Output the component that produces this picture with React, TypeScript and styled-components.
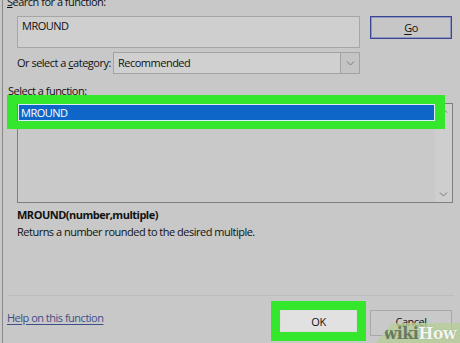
import styled, { createGlobalStyle } from "styled-components";

const GlobalStyle = createGlobalStyle`
  html, body {
    margin: 0;
    padding: 0;
    background: #c8c8c8;
  }
  body {
    font-family: "Open Sans", "Noto Sans", "Liberation Sans", sans-serif;
    font-size: 11px;
    letter-spacing: -0.5px;
    color: #111;
  }
`;

const GREEN = "#34e62c";

const Page = styled.div`
  position: relative;
  width: 460px;
  height: 343px;
  overflow: hidden;
  background: #c8c8c8;
`;

const Dialog = styled.div`
  margin-left: 2px;
  height: 343px;
  border-left: 1px solid #888;
  padding-left: 4px;
  box-sizing: border-box;
  display: flex;
  flex-direction: column;
`;

const Label = styled.div<{ $indent?: number; $top?: number }>`
  height: 14px;
  line-height: 14px;
  margin-top: ${(p) => p.$top ?? 0}px;
  padding-left: ${(p) => p.$indent ?? 0}px;
  white-space: nowrap;
`;

const Row = styled.div<{ $top: number }>`
  display: flex;
  align-items: flex-start;
  margin-top: ${(p) => p.$top}px;
  padding-left: 10px;
`;

const SearchBox = styled.div`
  width: 343px;
  height: 32px;
  box-sizing: border-box;
  border: 1px solid #a6a6a6;
  background: #cfcfcf;
  padding: 2px 4px;
  line-height: 14px;
`;

const GoButton = styled.div`
  margin-left: 10px;
  width: 82px;
  height: 23px;
  box-sizing: border-box;
  border: 1px solid #3a4790;
  box-shadow: inset 0 0 0 1px #8d95c0;
  background: #c6c6c6;
  display: flex;
  align-items: center;
  justify-content: center;
  u {
    text-decoration-thickness: 1px;
    text-underline-offset: 2px;
  }
`;

const CategoryLabel = styled.div`
  width: 96px;
  height: 22px;
  line-height: 22px;
  white-space: nowrap;
`;

const Select = styled.div`
  width: 247px;
  height: 22px;
  box-sizing: border-box;
  border: 1px solid #a3a3a3;
  background: #d0d0d0;
  display: flex;
  align-items: stretch;
`;

const SelectValue = styled.div`
  flex: 1;
  padding-left: 4px;
  line-height: 20px;
`;

const SelectArrow = styled.div`
  width: 18px;
  border-left: 1px solid #a3a3a3;
  background: #c4c4c4;
  display: flex;
  align-items: center;
  justify-content: center;
`;

const ListBox = styled.div`
  margin-top: 5px;
  margin-left: 10px;
  width: 436px;
  height: 100px;
  box-sizing: border-box;
  border: 1px solid #7e7e7e;
  background: #c9c9c9;
  display: flex;
`;

const ListItems = styled.div`
  flex: 1;
`;

const SelectedItem = styled.div`
  position: relative;
  height: 17px;
  box-sizing: border-box;
  border: 1px solid #dcecf8;
  background: #0f66c9;
  color: #fff;
  line-height: 15px;
  padding-left: 2px;
`;

const Highlight = styled.div`
  position: absolute;
  top: -10px;
  bottom: -9px;
  left: -12px;
  right: -11px;
  border-style: solid;
  border-color: ${GREEN};
  border-width: 9px 10px 8px 10px;
  pointer-events: none;
`;

const Scrollbar = styled.div`
  width: 17px;
  background: #cecece;
  display: flex;
  flex-direction: column;
  justify-content: space-between;
  align-items: center;
  padding: 4px 0 5px;
`;

const FuncName = styled.div`
  margin-top: 4px;
  padding-left: 10px;
  height: 15px;
  line-height: 15px;
  font-weight: 700;
`;

const FuncDesc = styled.div`
  margin-top: 2px;
  padding-left: 10px;
  height: 15px;
  line-height: 15px;
`;

const Separator = styled.div`
  margin-top: 56px;
  margin-right: 6px;
  height: 1px;
  background: #bdbdbd;
`;

const Footer = styled.div`
  margin-top: 14px;
  display: flex;
  align-items: flex-start;
`;

const HelpLink = styled.div`
  margin-top: 1px;
  color: #3d4f8a;
  text-decoration: underline;
  text-underline-offset: 2px;
  line-height: 14px;
  flex: 1;
`;

const Button = styled.div<{ $focused?: boolean }>`
  width: ${(p) => (p.$focused ? 77 : 82)}px;
  height: ${(p) => (p.$focused ? 22 : 26)}px;
  margin-right: ${(p) => (p.$focused ? 13 : 8)}px;
  box-sizing: border-box;
  border: 1px solid ${(p) => (p.$focused ? "#dcdcdc" : "#a8a8a8")};
  background: ${(p) => (p.$focused ? "#e1e1e1" : "#c9c9c9")};
  display: flex;
  align-items: ${(p) => (p.$focused ? "center" : "flex-start")};
  padding-top: ${(p) => (p.$focused ? 0 : 3)}px;
  justify-content: center;
  outline: ${(p) => (p.$focused ? `9px solid ${GREEN}` : "none")};
  color: #111;
`;

const Watermark = styled.div`
  position: absolute;
  right: 0;
  bottom: 0;
  width: 84px;
  height: 20px;
  background: rgba(180, 205, 150, 0.75);
  clip-path: polygon(16px 0, 100% 0, 100% 100%, 0 100%);
  display: flex;
  align-items: center;
  justify-content: flex-end;
  padding-right: 4px;
  box-sizing: border-box;
  font-family: "DejaVu Serif", "Liberation Serif", serif;
  font-weight: 700;
  font-size: 16px;
  letter-spacing: -0.6px;
`;

const Wiki = styled.span`
  color: #6a7a5e;
`;

const How = styled.span`
  color: #f3f5ef;
  text-shadow: 0 0 1px #8a9a80;
`;

function Chevron({ up }: { up?: boolean }) {
  return (
    <svg width="9" height="5" viewBox="0 0 9 5">
      <polyline
        points={up ? "1,4.5 4.5,1 8,4.5" : "1,0.5 4.5,4 8,0.5"}
        fill="none"
        stroke="#7a7a7a"
        strokeWidth="1"
      />
    </svg>
  );
}

export default function App() {
  return (
    <Page>
      <GlobalStyle />
      <Dialog>
        <Label $top={-5}>
          <u>S</u>earch for a function:
        </Label>
        <Row $top={7}>
          <SearchBox>MROUND</SearchBox>
          <GoButton>
            <u>G</u>o
          </GoButton>
        </Row>
        <Row $top={4}>
          <CategoryLabel>
            Or select a <u>c</u>ategory:
          </CategoryLabel>
          <Select>
            <SelectValue>Recommended</SelectValue>
            <SelectArrow>
              <Chevron />
            </SelectArrow>
          </Select>
        </Row>
        <Label $top={10} $indent={1}>
          Select a functio<u>n</u>:
        </Label>
        <ListBox>
          <ListItems>
            <SelectedItem>
              MROUND
              <Highlight />
            </SelectedItem>
          </ListItems>
          <Scrollbar>
            <Chevron up />
            <Chevron />
          </Scrollbar>
        </ListBox>
        <FuncName>MROUND(number,multiple)</FuncName>
        <FuncDesc>Returns a number rounded to the desired multiple.</FuncDesc>
        <Separator />
        <Footer>
          <HelpLink>Help on this function</HelpLink>
          <Button $focused>OK</Button>
          <Button>Cancel</Button>
        </Footer>
      </Dialog>
      <Watermark>
        <Wiki>wiki</Wiki>
        <How>How</How>
      </Watermark>
    </Page>
  );
}
